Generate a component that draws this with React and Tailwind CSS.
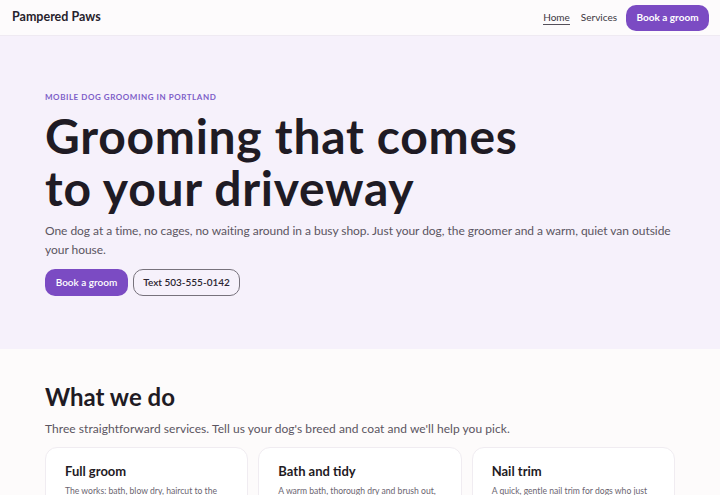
const services = [
  { title: "Full groom", text: "The works: bath, blow dry, haircut to the breed standard or your own brief, nails and ears." },
  { title: "Bath and tidy", text: "A warm bath, thorough dry and brush out, plus a tidy around the face, feet and rear." },
  { title: "Nail trim", text: "A quick, gentle nail trim for dogs who just need their feet sorted between full grooms." },
];

export default function App() {
  return (
    <div className="min-h-screen bg-[#fdfbfb] text-[#1f1b24] font-['Lato','Noto_Sans',sans-serif]">
      <header className="h-9 flex items-center justify-between pl-3 pr-[11px] bg-[#fdfbfc] border-b border-[#efeaf2]">
        <span className="text-[12.5px] font-bold text-[#27222c]">Pampered Paws</span>
        <nav className="flex items-center text-[10px] text-[#3b3640]">
          <a className="border-b-[1.5px] border-[#55505a] leading-[13px] mr-[11px]">Home</a>
          <a className="mr-[9px]">Services</a>
          <a className="h-[26px] w-[83px] flex items-center justify-center rounded-[10px] bg-[#7b4bc3] text-white font-bold">Book a groom</a>
        </nav>
      </header>

      <section className="bg-[#f6f1fb] pt-[55px] pb-[53px]">
        <div className="max-w-[630px] mx-auto">
          <p className="text-[8px] font-bold tracking-[0.07em] text-[#7d5ec8] uppercase">Mobile dog grooming in Portland</p>
          <h1 className="mt-[7px] text-[48px] leading-[52px] font-bold tracking-[0.015em] text-[#1f1b24]">Grooming that comes<br />to your driveway</h1>
          <p className="mt-[7px] text-[12px] leading-[19px] tracking-[-0.04px] text-[#5b5561]">One dog at a time, no cages, no waiting around in a busy shop. Just your dog, the groomer and a warm, quiet van outside your house.</p>
          <div className="mt-[10px] flex gap-[5px]">
            <a className="h-[27px] w-[83px] flex items-center justify-center rounded-[10px] bg-[#7b4bc3] text-white text-[10px] font-semibold">Book a groom</a>
            <a className="h-[27px] w-[107px] flex items-center justify-center rounded-[10px] border border-[#77727c] text-[10px] font-semibold text-[#2a2530]">Text 503-555-0142</a>
          </div>
        </div>
      </section>

      <section className="pt-[34px]">
        <div className="max-w-[630px] mx-auto">
          <h2 className="text-[24px] leading-[28px] font-bold text-[#1f1b24]">What we do</h2>
          <p className="mt-[9px] text-[12px] leading-[18px] tracking-[0.05px] text-[#5b5561]">Three straightforward services. Tell us your dog's breed and coat and we'll help you pick.</p>
          <div className="mt-[9px] grid grid-cols-3 gap-[10px]">
            {services.map((s) => (
              <div key={s.title} className="bg-white border border-[#f0ecf1] rounded-[12px] px-[19px] pt-[14px] pb-[18px]">
                <h3 className="text-[13px] font-bold text-[#1f1b24]">{s.title}</h3>
                <p className="mt-[2px] text-[8.6px] leading-[14px] text-[#6b6570]">{s.text}</p>
              </div>
            ))}
          </div>
        </div>
      </section>
    </div>
  );
}
